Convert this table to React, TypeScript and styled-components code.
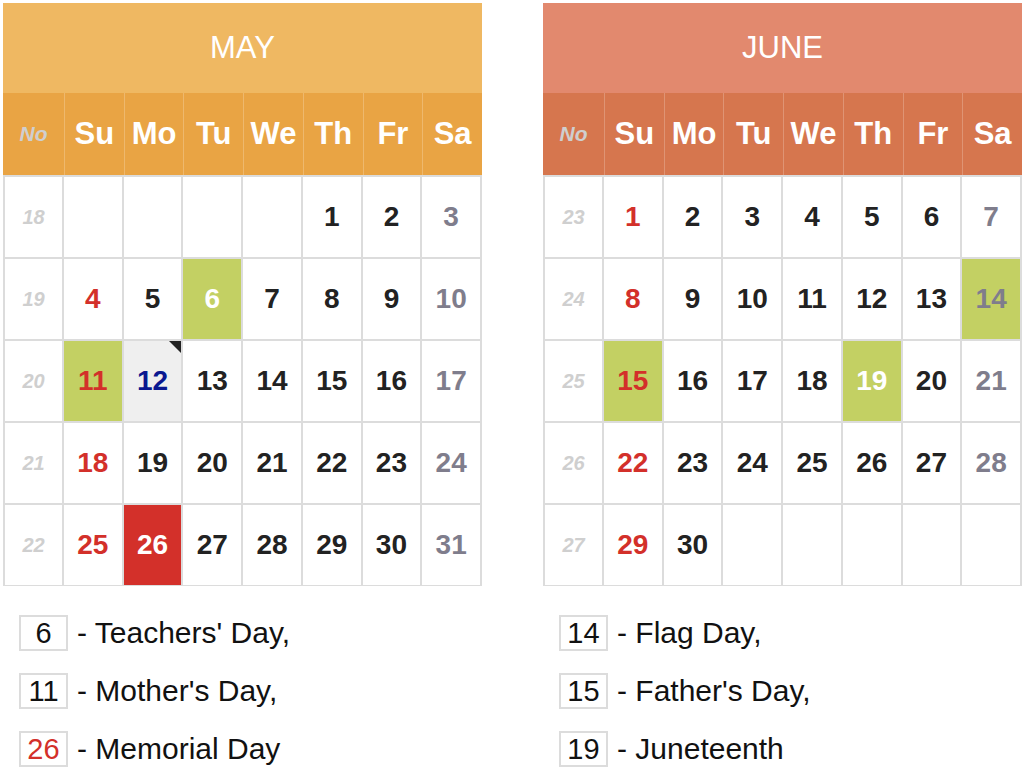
import React from 'react'
import styled, { createGlobalStyle } from 'styled-components'

const GlobalStyle = createGlobalStyle`
  html, body {
    margin: 0;
    padding: 0;
    background: #fff;
    font-family: "Liberation Sans", Arial, sans-serif;
  }
`

type Tone = 'default' | 'red' | 'sat' | 'white' | 'blue'
type Fill = 'none' | 'green' | 'red' | 'today'

type Day = {
  n?: number
  tone?: Tone
  fill?: Fill
}

type Month = {
  name: string
  titleBg: string
  headBg: string
  weeks: { no: number; days: Day[] }[]
  notes: { n: number; red?: boolean; label: string }[]
}

const toneColor: Record<Tone, string> = {
  default: '#222222',
  red: '#d3302a',
  sat: '#7f7d8c',
  white: '#ffffff',
  blue: '#0a1890',
}

const fillColor: Record<Fill, string> = {
  none: '#ffffff',
  green: '#c3d063',
  red: '#d3302a',
  today: '#efefef',
}

const Page = styled.div`
  display: flex;
  gap: 61px;
  padding: 3px 2px 0 3px;
  width: 1024px;
  box-sizing: border-box;
`

const Column = styled.div`
  width: 479px;
  display: flex;
  flex-direction: column;
`

const Calendar = styled.div`
  display: grid;
  grid-template-columns: 59px repeat(7, 1fr);
  grid-template-rows: 90px 82px repeat(5, 82px);
  border-left: 2px solid #dcdcdc;
  border-bottom: 1px solid #dcdcdc;
  box-sizing: border-box;
`

const Title = styled.div<{ $bg: string }>`
  grid-column: 1 / -1;
  background: ${(p) => p.$bg};
  color: #fff;
  font-size: 31px;
  display: flex;
  align-items: center;
  justify-content: center;
  margin-left: -2px;
`

const HeadCell = styled.div<{ $bg: string; $first?: boolean }>`
  background: ${(p) => p.$bg};
  color: ${(p) => (p.$first ? '#cfcfcf' : '#fff')};
  font-weight: bold;
  font-style: ${(p) => (p.$first ? 'italic' : 'normal')};
  font-size: ${(p) => (p.$first ? '21px' : '31px')};
  display: flex;
  align-items: center;
  justify-content: center;
  border-left: ${(p) => (p.$first ? 'none' : '1px solid rgba(255, 255, 255, 0.22)')};
  margin-left: ${(p) => (p.$first ? '-2px' : '0')};
`

const WeekNo = styled.div`
  color: #cfcfcf;
  font-weight: bold;
  font-style: italic;
  font-size: 20px;
  display: flex;
  align-items: center;
  justify-content: center;
  border-right: 2px solid #dcdcdc;
  border-top: 2px solid #dcdcdc;
  box-sizing: border-box;
`

const DayCell = styled.div<{ $tone: Tone; $fill: Fill }>`
  position: relative;
  background: ${(p) => fillColor[p.$fill]};
  color: ${(p) => toneColor[p.$tone]};
  font-weight: bold;
  font-size: 28px;
  display: flex;
  align-items: center;
  justify-content: center;
  border-right: 2px solid #dcdcdc;
  border-top: 2px solid #dcdcdc;
  box-sizing: border-box;
`

const Corner = styled.span`
  position: absolute;
  top: 0;
  right: 0;
  width: 0;
  height: 0;
  border-top: 12px solid #222;
  border-left: 12px solid transparent;
`

const Notes = styled.div`
  display: flex;
  flex-direction: column;
  gap: 22px;
  padding: 29px 0 0 16px;
`

const NoteRow = styled.div`
  display: flex;
  align-items: center;
  gap: 9px;
  font-size: 30px;
  color: #111;
`

const NoteBox = styled.div<{ $red?: boolean }>`
  width: 49px;
  height: 36px;
  box-sizing: border-box;
  border: 2px solid #dcdcdc;
  display: flex;
  align-items: center;
  justify-content: center;
  font-size: 29px;
  color: ${(p) => (p.$red ? '#d3302a' : '#111')};
`

const heads = ['Su', 'Mo', 'Tu', 'We', 'Th', 'Fr', 'Sa']

const build = (
  startOffset: number,
  total: number,
  firstWeek: number,
  special: Record<number, Day>,
) => {
  const weeks: { no: number; days: Day[] }[] = []
  for (let w = 0; w < 5; w++) {
    const days: Day[] = []
    for (let d = 0; d < 7; d++) {
      const n = w * 7 + d - startOffset + 1
      if (n < 1 || n > total) {
        days.push({})
        continue
      }
      const base: Day = { n, tone: d === 0 ? 'red' : d === 6 ? 'sat' : 'default', fill: 'none' }
      days.push({ ...base, ...special[n] })
    }
    weeks.push({ no: firstWeek + w, days })
  }
  return weeks
}

const months: Month[] = [
  {
    name: 'MAY',
    titleBg: '#efb862',
    headBg: '#e9a444',
    weeks: build(4, 31, 18, {
      6: { fill: 'green', tone: 'white' },
      11: { fill: 'green' },
      12: { fill: 'today', tone: 'blue' },
      26: { fill: 'red', tone: 'white' },
    }),
    notes: [
      { n: 6, label: "- Teachers' Day," },
      { n: 11, label: "- Mother's Day," },
      { n: 26, red: true, label: '- Memorial Day' },
    ],
  },
  {
    name: 'JUNE',
    titleBg: '#e2896e',
    headBg: '#d6764e',
    weeks: build(0, 30, 23, {
      14: { fill: 'green' },
      15: { fill: 'green' },
      19: { fill: 'green', tone: 'white' },
    }),
    notes: [
      { n: 14, label: '- Flag Day,' },
      { n: 15, label: "- Father's Day," },
      { n: 19, label: '- Juneteenth' },
    ],
  },
]

const MonthView = ({ month }: { month: Month }) => (
  <Column>
    <Calendar>
      <Title $bg={month.titleBg}>{month.name}</Title>
      <HeadCell $bg={month.headBg} $first>
        No
      </HeadCell>
      {heads.map((h) => (
        <HeadCell key={h} $bg={month.headBg}>
          {h}
        </HeadCell>
      ))}
      {month.weeks.map((week) => (
        <React.Fragment key={week.no}>
          <WeekNo>{week.no}</WeekNo>
          {week.days.map((day, i) => (
            <DayCell key={i} $tone={day.tone ?? 'default'} $fill={day.fill ?? 'none'}>
              {day.n}
              {day.fill === 'today' && <Corner />}
            </DayCell>
          ))}
        </React.Fragment>
      ))}
    </Calendar>
    <Notes>
      {month.notes.map((note) => (
        <NoteRow key={note.n}>
          <NoteBox $red={note.red}>{note.n}</NoteBox>
          <span>{note.label}</span>
        </NoteRow>
      ))}
    </Notes>
  </Column>
)

export default function App() {
  return (
    <>
      <GlobalStyle />
      <Page>
        {months.map((m) => (
          <MonthView key={m.name} month={m} />
        ))}
      </Page>
    </>
  )
}
